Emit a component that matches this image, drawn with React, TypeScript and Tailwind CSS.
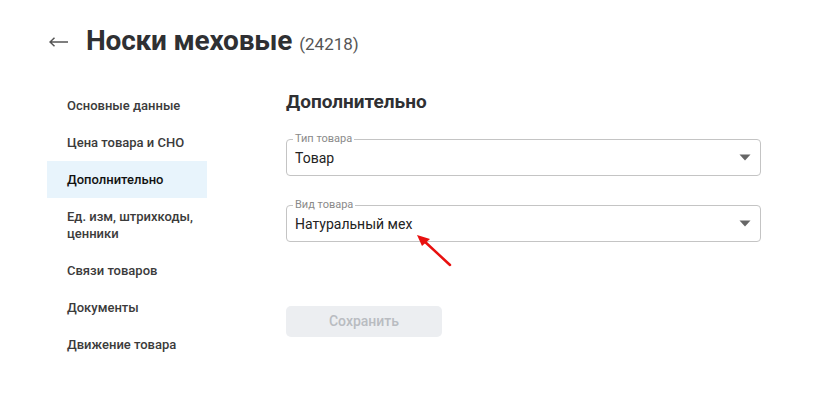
import { useState } from "react";

const menu = [
  "Основные данные",
  "Цена товара и СНО",
  "Дополнительно",
  "Ед. изм, штрихкоды, ценники",
  "Связи товаров",
  "Документы",
  "Движение товара",
];

function SelectField({ label, value }: { label: string; value: string }) {
  return (
    <div className="relative flex h-[37px] items-center justify-between rounded-[4px] border border-[#c4c4c4] pl-[8px] pr-[9px]">
      <span className="absolute left-[6px] top-[-8px] bg-white px-[2px] text-[11px] leading-[14px] text-[#8a8a8a]">
        {label}
      </span>
      <span className="text-[14px] leading-[18px] text-[#222]">{value}</span>
      <svg width="12" height="7" viewBox="0 0 12 7">
        <path d="M0.5 0.5 L11.5 0.5 L6 6.5 Z" fill="#666" />
      </svg>
    </div>
  );
}

export default function App() {
  const [active, setActive] = useState(2);

  return (
    <div className="h-[410px] w-[839px] bg-white font-['Roboto',sans-serif] text-[#333]">
      <div className="flex items-center pl-[49px] pt-[23px]">
        <svg width="19" height="10" viewBox="0 0 19 10" className="mt-[2px]">
          <path d="M1 5 H19 M5.5 0.8 L1 5 L5.5 9.2" fill="none" stroke="#555" strokeWidth="1.5" />
        </svg>
        <div className="ml-[18px] flex items-baseline">
          <h1 className="text-[28px] font-bold leading-[36px] tracking-[-0.2px] text-[#2f3033]">Носки меховые</h1>
          <span className="ml-[7px] text-[17px] text-[#555]">(24218)</span>
        </div>
      </div>

      <div className="mt-[28px] flex">
        <nav className="ml-[47px] flex w-[160px] flex-col">
          {menu.map((item, i) => (
            <button
              key={item}
              onClick={() => setActive(i)}
              className={
                "py-[10px] pl-[20px] pr-[10px] text-left text-[13px] font-medium leading-[17px] " +
                (i === active ? "bg-[#e8f4fc] text-[#111]" : "text-[#3b3b3b]")
              }
            >
              {item}
            </button>
          ))}
        </nav>

        <div className="ml-[79px] w-[475px]">
          <h2 className="mt-[3px] text-[19px] font-bold leading-[24px] text-[#2f3033]">Дополнительно</h2>

          <div className="mt-[25px]">
            <SelectField label="Тип товара" value="Товар" />
          </div>

          <div className="relative mt-[29px]">
            <SelectField label="Вид товара" value="Натуральный мех" />
            <svg className="absolute left-[127px] top-[26px]" width="44" height="40" viewBox="0 0 44 40">
              <line x1="37" y1="34" x2="10" y2="9" stroke="#e8100f" strokeWidth="2.5" strokeLinecap="round" />
              <path d="M4 4 L17 8 L9 15 Z" fill="#e8100f" />
            </svg>
          </div>

          <button className="mt-[64px] h-[31px] w-[156px] rounded-[5px] bg-[#eceef1] text-[14px] font-medium text-[#b9bcc1]">
            Сохранить
          </button>
        </div>
      </div>
    </div>
  );
}
